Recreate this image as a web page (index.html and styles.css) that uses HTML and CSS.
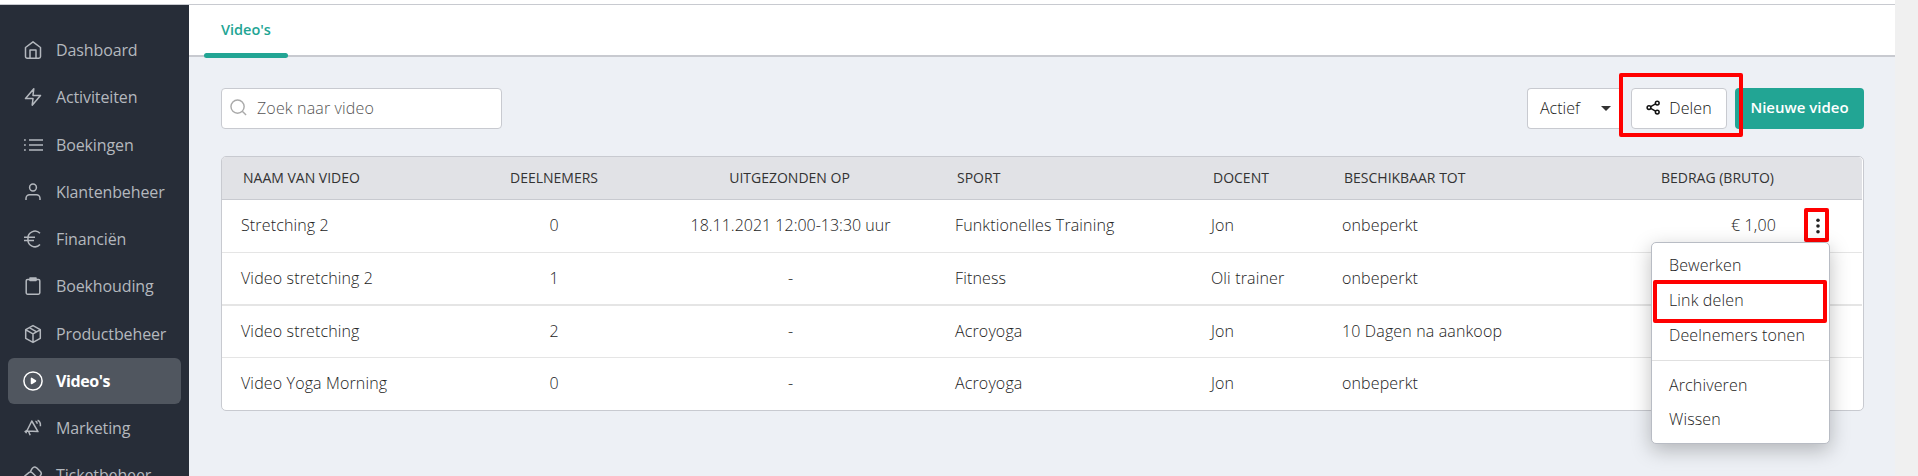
FILE: index.html
```
<!DOCTYPE html>
<html lang="nl">

<head>
    <meta charset="UTF-8">
    <meta name="viewport" content="width=device-width, initial-scale=1.0">
    <title>Video's</title>
    <link rel="stylesheet" href="styles.css">
</head>

<body>
    <div class="app">
        <aside class="sidebar">
            <nav>
                <ul>
                    <li><a href="#"><svg class="icon" viewBox="0 0 20 20"><path d="M2.5 7.5 10 1.8l7.5 5.7v9a1.7 1.7 0 0 1-1.7 1.7H4.2a1.7 1.7 0 0 1-1.7-1.7zM7 18v-8h6v8"/></svg>Dashboard</a></li>
                    <li><a href="#"><svg class="icon" viewBox="0 0 20 20"><path d="M10.8 1.8 2.5 11.6H10l-.8 6.6 8.3-9.8H10z"/></svg>Activiteiten</a></li>
                    <li><a href="#"><svg class="icon" viewBox="0 0 20 20"><path d="M6 5h14M6 10h14M6 15h14M1 5h1.8M1 10h1.8M1 15h1.8"/></svg>Boekingen</a></li>
                    <li><a href="#"><svg class="icon" viewBox="0 0 20 20"><circle cx="10" cy="5.5" r="3.4"/><path d="M3 18v-1.6a3.6 3.6 0 0 1 3.6-3.6h6.8a3.6 3.6 0 0 1 3.6 3.6V18"/></svg>Klantenbeheer</a></li>
                    <li><a href="#"><svg class="icon" viewBox="0 0 20 20"><path d="M17 4.3A7 7 0 0 0 5 9.9a7 7 0 0 0 12 5.7M1 8.2h11M1 11.6h10"/></svg>Financiën</a></li>
                    <li><a href="#"><svg class="icon" viewBox="0 0 20 20"><path d="M7 3.4H4.6a1.4 1.4 0 0 0-1.4 1.4v12a1.4 1.4 0 0 0 1.4 1.4h10.8a1.4 1.4 0 0 0 1.4-1.4v-12a1.4 1.4 0 0 0-1.4-1.4H13"/><path class="solid" d="M7 2h6v2.5H7z"/></svg>Boekhouding</a></li>
                    <li><a href="#"><svg class="icon" viewBox="0 0 20 20"><path d="M10 1.6 2.7 5.7v8.6l7.3 4.1 7.3-4.1V5.7zM2.9 5.9l7.1 4 7.1-4M10 9.9v8.3M6.3 3.7l7.3 4.2"/></svg>Productbeheer</a></li>
                    <li class="active"><a href="#"><svg class="icon icon-play" viewBox="0 0 20 20"><circle cx="10" cy="10" r="9.1"/><path class="solid" d="M8.5 7.4v5.2l4-2.6z"/></svg>Video's</a></li>
                    <li><a href="#"><svg class="icon" viewBox="0 0 20 20"><path d="M8.8 3 3.8 13l11.2.6zM4 12.4l-2.4 1.4M5.6 13.5l1.6 3.8M3.5 13.2l-.6 2M12.4 3.2q1.8.4 1.8 2.6M14.6 2.2q3.2 1.2 2.8 6"/></svg>Marketing</a></li>
                    <li><a href="#"><svg class="icon" viewBox="0 0 20 20"><path d="m2 10.8 4.2-3.4q1.6-1 3 .3l3.3 3.3q1.3 1.6 0 3l-4 4.2M7.4 6.6l1.8-3.2q2-2.4 4.4-.6l4 4q1.6 2-.4 4l-4 3.4M2 10.8q-1.4 1.8.4 3.4l3.2 3.2"/></svg>Ticketbeheer</a></li>
                </ul>
            </nav>
        </aside>

        <main>
            <div class="tabs">
                <a class="tab" href="#">Video's</a>
            </div>

            <div class="toolbar">
                <label class="search">
                    <svg viewBox="0 0 18 18"><circle cx="8" cy="8" r="7"/><path d="m13 13 4 4"/></svg>
                    <input type="text" placeholder="Zoek naar video">
                </label>
                <div class="actions">
                    <div class="select">Actief<span class="caret"></span></div>
                    <div class="share-wrap">
                        <button class="btn-share">
                            <svg viewBox="0 0 16 16"><circle cx="3.2" cy="8" r="2"/><circle cx="12" cy="3.2" r="2"/><circle cx="12" cy="12.8" r="2"/><path d="m5 7 5.2-2.8M5 9l5.2 2.8"/></svg>Delen
                        </button>
                        <span class="mark mark-share"></span>
                    </div>
                    <button class="btn-new">Nieuwe video</button>
                </div>
            </div>

            <div class="table-wrap">
                <table>
                    <colgroup>
                        <col class="col-name"><col class="col-count"><col class="col-date"><col class="col-sport"><col class="col-teacher"><col class="col-until"><col class="col-price"><col class="col-menu">
                    </colgroup>
                    <thead>
                        <tr>
                            <th>Naam van video</th>
                            <th class="center">Deelnemers</th>
                            <th class="center date">Uitgezonden op</th>
                            <th>Sport</th>
                            <th>Docent</th>
                            <th>Beschikbaar tot</th>
                            <th class="right">Bedrag (bruto)</th>
                            <th></th>
                        </tr>
                    </thead>
                    <tbody>
                        <tr>
                            <td>Stretching 2</td>
                            <td class="center">0</td>
                            <td class="center date">18.11.2021 12:00-13:30 uur</td>
                            <td>Funktionelles Training</td>
                            <td>Jon</td>
                            <td>onbeperkt</td>
                            <td class="right">€ 1,00</td>
                            <td class="menu-cell">
                                <div class="more">
                                    <svg viewBox="0 0 4 16"><circle cx="2" cy="2.3" r="1.8"/><circle cx="2" cy="8" r="1.8"/><circle cx="2" cy="13.7" r="1.8"/></svg>
                                    <ul class="dropdown">
                                        <li>Bewerken</li>
                                        <li>Link delen<span class="mark mark-link"></span></li>
                                        <li>Deelnemers tonen</li>
                                        <li class="divider"></li>
                                        <li>Archiveren</li>
                                        <li>Wissen</li>
                                    </ul>
                                    <span class="mark mark-more"></span>
                                </div>
                            </td>
                        </tr>
                        <tr class="thick">
                            <td>Video stretching 2</td>
                            <td class="center">1</td>
                            <td class="center date">-</td>
                            <td>Fitness</td>
                            <td>Oli trainer</td>
                            <td>onbeperkt</td>
                            <td></td>
                            <td></td>
                        </tr>
                        <tr class="short">
                            <td>Video stretching</td>
                            <td class="center">2</td>
                            <td class="center date">-</td>
                            <td>Acroyoga</td>
                            <td>Jon</td>
                            <td>10 Dagen na aankoop</td>
                            <td></td>
                            <td></td>
                        </tr>
                        <tr class="short">
                            <td>Video Yoga Morning</td>
                            <td class="center">0</td>
                            <td class="center date">-</td>
                            <td>Acroyoga</td>
                            <td>Jon</td>
                            <td>onbeperkt</td>
                            <td></td>
                            <td></td>
                        </tr>
                    </tbody>
                </table>
            </div>
        </main>
        <div class="gutter"></div>
    </div>
</body>

</html>
```

FILE: styles.css
```
* {
    margin: 0;
    padding: 0;
    box-sizing: border-box;
    font-family: 'Open Sans', 'Noto Sans', sans-serif;
    text-decoration: none;
    list-style: none;
}

body {
    background-color: #fff;
    color: #222;
    font-size: 16px;
}

.app {
    display: flex;
    height: 476px;
    overflow: hidden;
}

/* sidebar */
.sidebar {
    width: 189px;
    flex-shrink: 0;
    margin-top: 4px;
    padding: 22px 8px 0;
    background-color: #272d38;
    border-top: 1px solid #c8cad0;
    overflow: hidden;
}

.sidebar li {
    height: 46px;
    margin-bottom: 1.25px;
    border-radius: 6px;
}

.sidebar a {
    display: flex;
    align-items: center;
    height: 100%;
    padding-left: 15px;
    color: #b4b8be;
    letter-spacing: -0.12px;
    white-space: nowrap;
}

.sidebar .active {
    background-color: #50565f;
}

.sidebar .active a {
    color: #fff;
    font-weight: 700;
    letter-spacing: -0.4px;
}

.icon {
    width: 20px;
    height: 20px;
    margin-right: 13px;
    flex-shrink: 0;
    fill: none;
    stroke: currentColor;
    stroke-width: 1.5;
    stroke-linejoin: round;
}

.icon .solid {
    fill: currentColor;
}

.icon-play {
    overflow: visible;
}

/* main */
main {
    flex: 1;
    min-width: 0;
    margin-top: 4px;
    background-color: #edf0f5;
    border-top: 1px solid #c8cad0;
}

.gutter {
    width: 23px;
    background-color: #f0f0f0;
}

.tabs {
    height: 52px;
    padding-left: 15px;
    background-color: #fff;
    border-bottom: 2px solid #c8cad0;
}

.tab {
    display: block;
    width: 84px;
    height: 53px;
    padding: 15px 0 0 17px;
    color: #22a594;
    font-size: 14.5px;
    font-weight: 600;
    position: relative;
}

.tab::after {
    content: '';
    position: absolute;
    left: 0;
    bottom: 0;
    width: 84px;
    height: 5px;
    border-radius: 3px;
    background-color: #22a594;
}

.toolbar {
    display: flex;
    justify-content: space-between;
    padding: 31px 31px 27px 32px;
}

.search {
    display: flex;
    align-items: center;
    width: 281px;
    height: 41px;
    padding: 0 0 2px 8px;
    background-color: #fff;
    border: 1px solid #c8cad0;
    border-radius: 4px;
}

.search svg {
    width: 17px;
    height: 17px;
    margin-right: 10px;
    fill: none;
    stroke: #aaa;
    stroke-width: 1.5;
}

.search input {
    width: 200px;
    border: none;
    outline: none;
    font-size: 16px;
    font-weight: 300;
    letter-spacing: 0.15px;
}

.search input::placeholder {
    color: #555;
}

.actions {
    display: flex;
    height: 41px;
}

.select {
    display: flex;
    align-items: center;
    width: 94px;
    padding: 0 0 2px 12px;
    background-color: #fff;
    border: 1px solid #c8cad0;
    border-right: none;
    border-radius: 4px 0 0 4px;
    font-weight: 300;
}

.caret {
    margin: 2px 0 0 21px;
    border: 5px solid transparent;
    border-top-color: #333;
    border-bottom: none;
}

.share-wrap {
    position: relative;
    margin: 0 8px 0 10px;
}

.btn-share {
    display: flex;
    align-items: center;
    justify-content: center;
    width: 96px;
    height: 41px;
    padding-bottom: 2px;
    color: #111;
    background-color: #fff;
    border: 1px solid #c8cad0;
    border-radius: 4px;
    font-size: 16px;
    font-weight: 300;
    letter-spacing: 0.1px;
}

.btn-share svg {
    width: 15px;
    height: 15px;
    margin-right: 8px;
    fill: none;
    stroke: #111;
    stroke-width: 1.6;
}

.btn-new {
    width: 129px;
    height: 41px;
    padding-bottom: 3px;
    color: #fff;
    background-color: #22a594;
    border: none;
    border-radius: 4px;
    font-size: 15px;
    font-weight: 600;
}

/* red highlight frames */
.mark {
    position: absolute;
    border: 4px solid #f00;
    border-radius: 2px;
}

.mark-share {
    left: -12px;
    top: -15px;
    width: 124px;
    height: 64px;
}

.mark-more {
    left: -12px;
    top: -10px;
    width: 25px;
    height: 34px;
}

.mark-link {
    left: 1px;
    top: -3px;
    width: 174px;
    height: 43px;
}

/* table */
.table-wrap {
    margin: 0 31px 0 32px;
    background-color: #fff;
    border: 1px solid #c8cad0;
    border-radius: 5px;
}

table {
    width: 1640px;
    table-layout: fixed;
    border-collapse: separate;
    border-spacing: 0;
}

.col-name { width: 260px; }
.col-count { width: 144px; }
.col-date { width: 310px; }
.col-sport { width: 256px; }
.col-teacher { width: 131px; }
.col-until { width: 220px; }
.col-price { width: 252px; }

th {
    height: 43px;
    padding: 0 21px 2px;
    background-color: #e1e2e6;
    border-bottom: 1px solid #c8cad0;
    color: #333;
    font-size: 14px;
    font-weight: 400;
    text-align: left;
    text-transform: uppercase;
    white-space: nowrap;
}

th:first-child {
    border-top-left-radius: 4px;
}

th:last-child {
    border-top-right-radius: 4px;
}

td {
    height: 53px;
    padding: 0 19px 2px;
    border-bottom: 1px solid #e5e5e5;
    font-weight: 300;
    letter-spacing: 0.14px;
    white-space: nowrap;
}

.thick td {
    border-bottom-width: 2px;
}

.short td {
    height: 52px;
}

tbody tr:last-child td {
    padding-bottom: 3px;
    border-bottom: none;
}

.center {
    text-align: center;
    letter-spacing: 0;
}

.date {
    padding-left: 38px;
}

.right {
    text-align: right;
}

.menu-cell {
    padding: 0;
}

.more {
    position: relative;
    width: 4px;
    height: 16px;
    margin-left: 21px;
}

.more > svg {
    display: block;
    width: 4px;
    height: 16px;
    fill: #222;
}

.dropdown {
    position: absolute;
    right: -10px;
    top: 24px;
    z-index: 1;
    width: 179px;
    height: 202px;
    padding-top: 5px;
    background-color: #fff;
    border: 1px solid #b8bcc4;
    border-radius: 5px;
    box-shadow: 0 6px 20px rgba(0, 0, 0, 0.25);
}

.dropdown li {
    position: relative;
    height: 35px;
    padding-left: 17px;
    line-height: 35px;
}

.dropdown li:last-child {
    line-height: 33px;
}

.dropdown .divider {
    height: 1px;
    margin: 7px 0;
    background-color: #e0e0e0;
}
```
